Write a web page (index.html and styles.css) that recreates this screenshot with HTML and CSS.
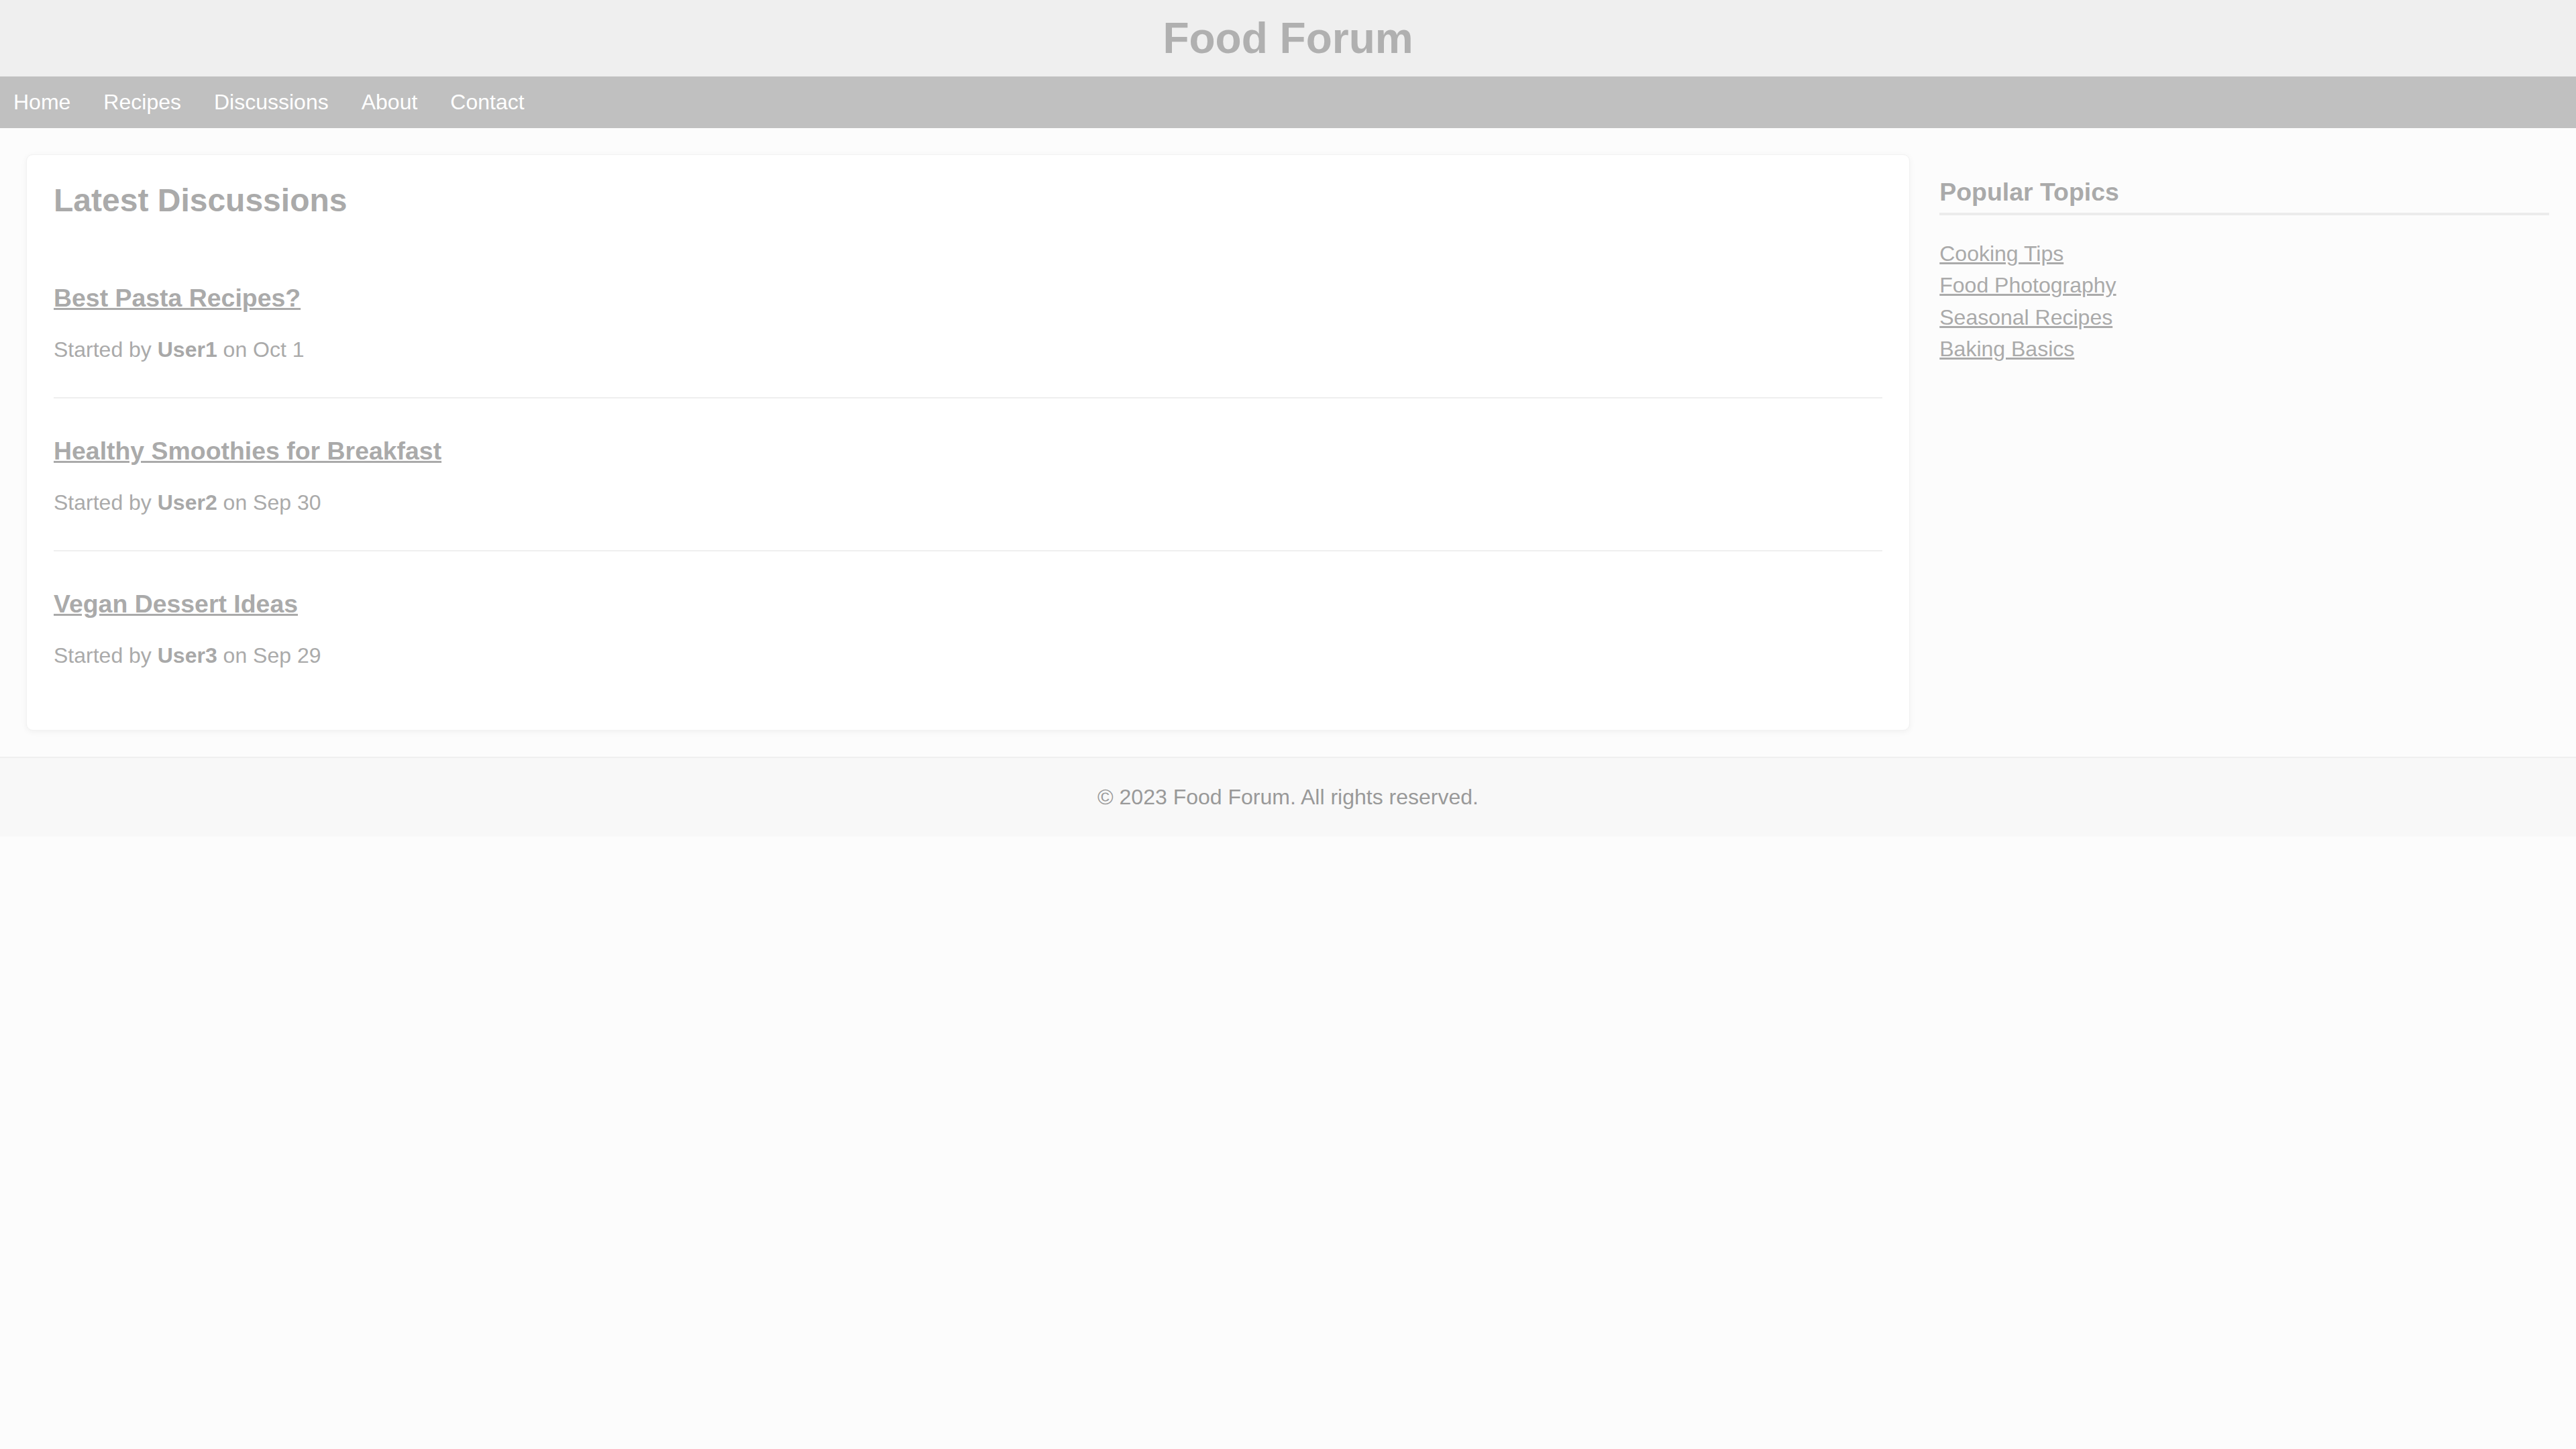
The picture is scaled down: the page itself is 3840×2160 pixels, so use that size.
FILE: index.html
```html
<!DOCTYPE html>
<html lang="en">
<head>
<meta charset="utf-8">
<title>Food Forum</title>
<link rel="stylesheet" href="styles.css">
</head>
<body>
<header class="site-header">
  <h1 class="site-title">Food Forum</h1>
</header>
<nav class="site-nav">
  <a href="#">Home</a>
  <a href="#">Recipes</a>
  <a href="#">Discussions</a>
  <a href="#">About</a>
  <a href="#">Contact</a>
</nav>
<main class="layout">
  <section class="content">
    <h2 class="content-title">Latest Discussions</h2>
    <div class="topic">
      <h3 class="topic-title"><a href="#">Best Pasta Recipes?</a></h3>
      <p class="topic-meta">Started by <strong>User1</strong> on Oct 1</p>
    </div>
    <div class="topic">
      <h3 class="topic-title"><a href="#">Healthy Smoothies for Breakfast</a></h3>
      <p class="topic-meta">Started by <strong>User2</strong> on Sep 30</p>
    </div>
    <div class="topic">
      <h3 class="topic-title"><a href="#">Vegan Dessert Ideas</a></h3>
      <p class="topic-meta">Started by <strong>User3</strong> on Sep 29</p>
    </div>
  </section>
  <aside class="sidebar">
    <h3 class="sidebar-title">Popular Topics</h3>
    <ul class="sidebar-list">
      <li><a href="#">Cooking Tips</a></li>
      <li><a href="#">Food Photography</a></li>
      <li><a href="#">Seasonal Recipes</a></li>
      <li><a href="#">Baking Basics</a></li>
    </ul>
  </aside>
</main>
<footer class="site-footer">
  <p>&copy; 2023 Food Forum. All rights reserved.</p>
</footer>
</body>
</html>
```
FILE: styles.css
```css
body {
  margin: 0;
  font-family: "Liberation Sans", Arial, sans-serif;
  background: #fcfcfc;
  color: #aaaaaa;
}

.site-header {
  background: #efefef;
  padding: 20px;
  text-align: center;
}

.site-title {
  margin: 0;
  font-size: 64px;
  font-weight: bold;
  color: #b0b0b0;
}

.site-nav {
  background: #c0c0c0;
  padding: 20px;
  display: flex;
  gap: 49px;
}

.site-nav a {
  color: #ffffff;
  font-size: 32px;
  text-decoration: none;
}

.layout {
  display: flex;
  gap: 40px;
  padding: 40px;
  align-items: flex-start;
}

.content {
  flex: 3;
  padding: 40px;
  background: #ffffff;
  border-radius: 10px;
  box-shadow: 0 2px 10px rgba(0, 0, 0, 0.05);
  border: 1px solid #f2f2f2;
  margin: -1px 4px -1px -1px;
}

.content-title {
  margin: 0 0 40px;
  font-size: 48px;
  color: #aaaaaa;
}

.topic {
  padding: 20px 0;
  border-bottom: 2px solid #efefef;
}

.topic:last-child {
  border-bottom: none;
}

.topic-title {
  margin: 37px 0;
  font-size: 37.44px;
}

.topic-title a {
  color: #aaaaaa;
}

.topic-meta {
  margin: 32px 0;
  font-size: 32px;
  color: #aaaaaa;
}

.topic-meta strong {
  color: #a8a8a8;
}

.sidebar {
  flex: 1;
}

.sidebar-title {
  margin: 34px 0 0;
  padding-bottom: 9px;
  font-size: 37.44px;
  color: #aaaaaa;
  border-bottom: 4px solid #ececec;
}

.sidebar-list {
  list-style: none;
  padding: 0;
  margin: 39px 0 0;
}

.sidebar-list li {
  margin-bottom: 10.5px;
  font-size: 32px;
  line-height: 1.15;
}

.sidebar-list a {
  color: #aaaaaa;
}

.site-footer {
  background: #f8f8f8;
  border-top: 2px solid #efefef;
  padding: 40px;
  text-align: center;
}

.site-footer p {
  margin: 0;
  font-size: 32px;
  color: #999999;
}
```
